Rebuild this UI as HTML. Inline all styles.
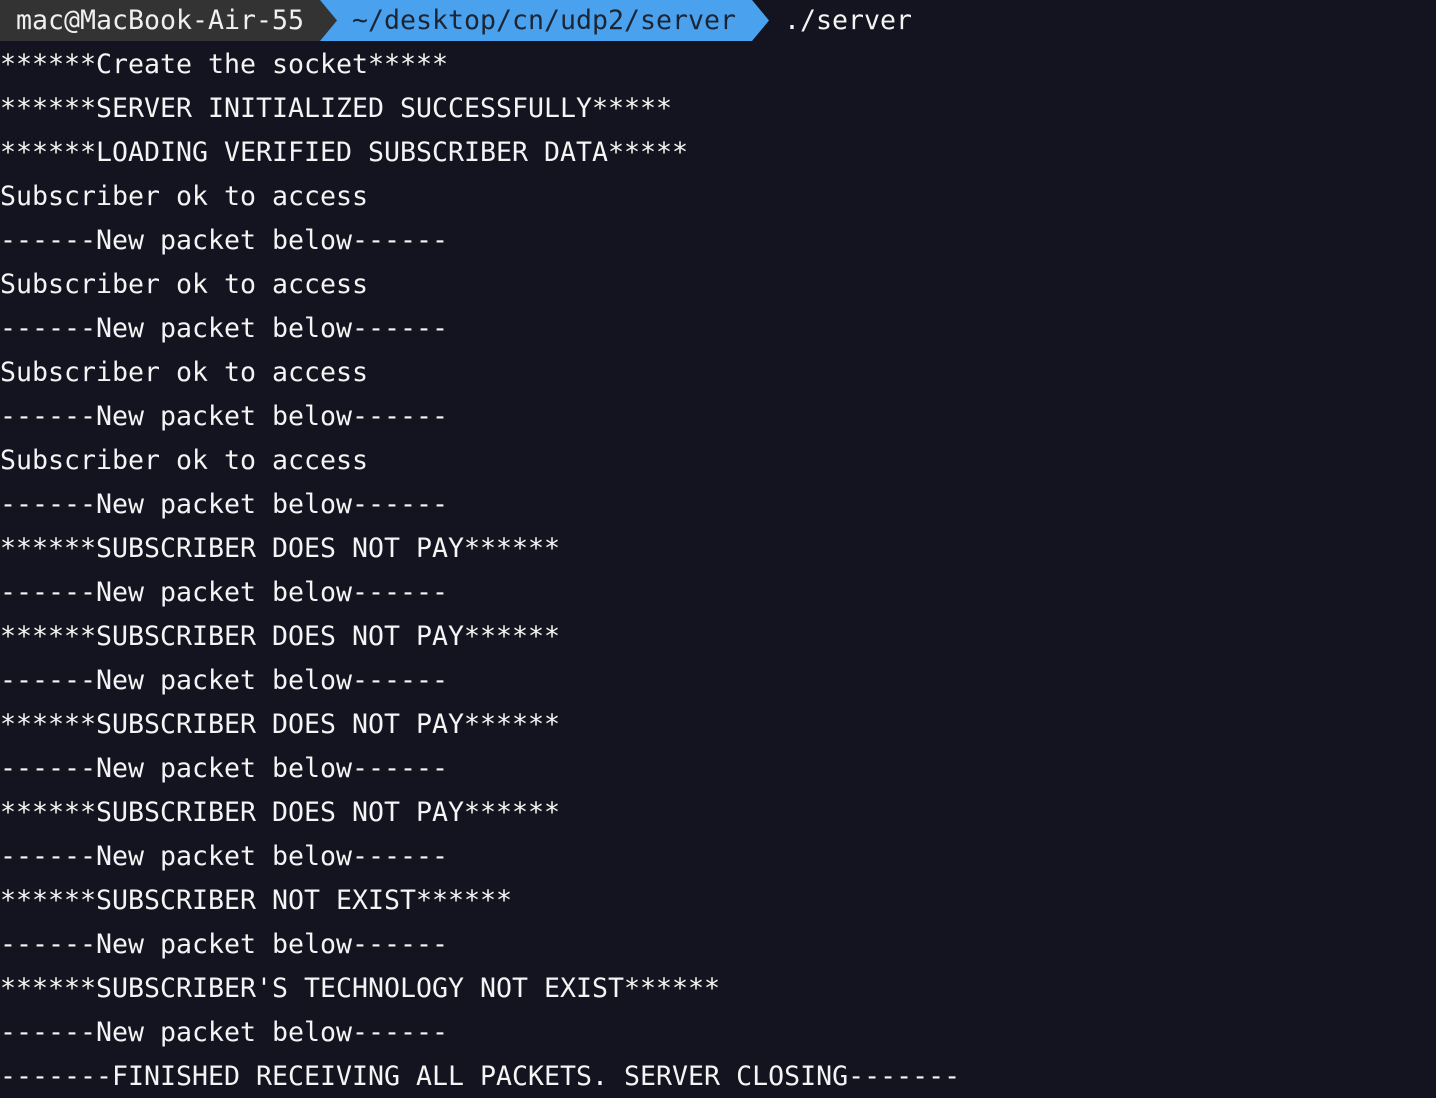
<!DOCTYPE html>
<html><head><meta charset="utf-8"><style>
html,body{margin:0;padding:0;background:#13141f;width:1436px;height:1098px;overflow:hidden}
body{font-family:"DejaVu Sans Mono","Liberation Mono",monospace;font-size:26.58px;color:#f4f4f4;position:relative}
.p{position:absolute;top:0;left:0;height:41px;width:1436px}
.seg{position:absolute;top:0;height:41px;line-height:42px;white-space:pre}
.l{position:absolute;left:0;height:44px;line-height:46px;white-space:pre}
</style></head><body>
<div class="p">
<div class="seg" style="left:0;width:336px;background:#333333;color:#f0f0f0"> mac@MacBook-Air-55</div>
<div class="seg" style="left:320px;width:432px;background:#4aa2ef;color:#1b2533;padding-left:32px;box-sizing:border-box">~/desktop/cn/udp2/server</div>
<svg style="position:absolute;left:320px;top:0" width="18" height="41"><polygon points="0,0 17,20.5 0,41" fill="#333333"/></svg>
<svg style="position:absolute;left:752px;top:0" width="18" height="41"><polygon points="0,0 17,20.5 0,41" fill="#4aa2ef"/></svg>
<div class="seg" style="left:784px;color:#f4f4f4">./server</div>
</div>
<div class="l" style="top:42px">******Create the socket*****</div>
<div class="l" style="top:86px">******SERVER INITIALIZED SUCCESSFULLY*****</div>
<div class="l" style="top:130px">******LOADING VERIFIED SUBSCRIBER DATA*****</div>
<div class="l" style="top:174px">Subscriber ok to access</div>
<div class="l" style="top:218px">------New packet below------</div>
<div class="l" style="top:262px">Subscriber ok to access</div>
<div class="l" style="top:306px">------New packet below------</div>
<div class="l" style="top:350px">Subscriber ok to access</div>
<div class="l" style="top:394px">------New packet below------</div>
<div class="l" style="top:438px">Subscriber ok to access</div>
<div class="l" style="top:482px">------New packet below------</div>
<div class="l" style="top:526px">******SUBSCRIBER DOES NOT PAY******</div>
<div class="l" style="top:570px">------New packet below------</div>
<div class="l" style="top:614px">******SUBSCRIBER DOES NOT PAY******</div>
<div class="l" style="top:658px">------New packet below------</div>
<div class="l" style="top:702px">******SUBSCRIBER DOES NOT PAY******</div>
<div class="l" style="top:746px">------New packet below------</div>
<div class="l" style="top:790px">******SUBSCRIBER DOES NOT PAY******</div>
<div class="l" style="top:834px">------New packet below------</div>
<div class="l" style="top:878px">******SUBSCRIBER NOT EXIST******</div>
<div class="l" style="top:922px">------New packet below------</div>
<div class="l" style="top:966px">******SUBSCRIBER'S TECHNOLOGY NOT EXIST******</div>
<div class="l" style="top:1010px">------New packet below------</div>
<div class="l" style="top:1054px">-------FINISHED RECEIVING ALL PACKETS. SERVER CLOSING-------</div>
</body></html>
